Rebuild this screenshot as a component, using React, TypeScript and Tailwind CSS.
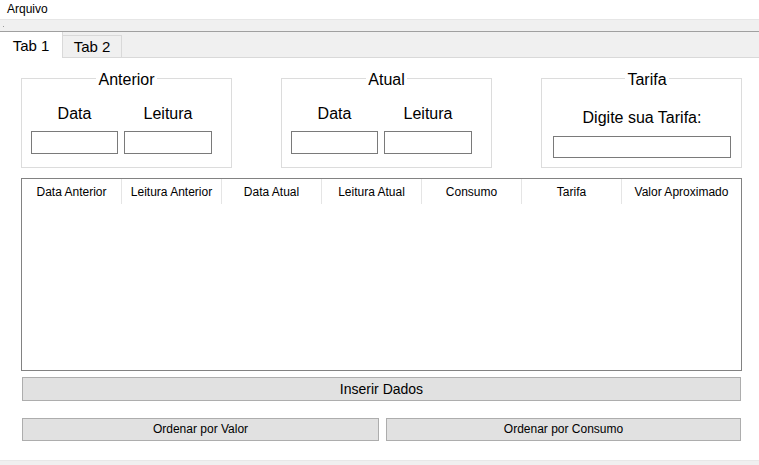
import { useState } from 'react'

const columns = [
  'Data Anterior',
  'Leitura Anterior',
  'Data Atual',
  'Leitura Atual',
  'Consumo',
  'Tarifa',
]

function LeituraGroup({ title }: { title: string }) {
  return (
    <fieldset className="w-[211px] border border-[#dcdcdc] px-[9px] pb-[13px]">
      <legend className="mx-auto px-[2px] text-[16px] leading-[20px] text-black">
        <span className="relative top-[2px]">{title}</span>
      </legend>
      <div className="mt-[15px] flex gap-[6px]">
        <div className="flex w-[87px] flex-col items-center">
          <span className="relative top-[1px] text-[16px] leading-[20px]">Data</span>
          <input className="mt-[8px] h-[23px] w-full border border-[#7a7a7a] bg-white outline-none" />
        </div>
        <div className="flex w-[88px] flex-col items-center">
          <span className="relative top-[1px] text-[16px] leading-[20px]">Leitura</span>
          <input className="mt-[8px] h-[23px] w-full border border-[#7a7a7a] bg-white outline-none" />
        </div>
      </div>
    </fieldset>
  )
}

export default function App() {
  const [tab, setTab] = useState(1)

  return (
    <div
      className="flex h-[465px] w-[759px] flex-col bg-white text-black"
      style={{ fontFamily: '"Liberation Sans", Arial, sans-serif' }}
    >
      {/* menu bar */}
      <div className="h-[19px] pl-[7px] text-[12px] leading-[19px]">Arquivo</div>
      <div className="relative h-[13px] border-t border-b border-t-[#e6e6e6] border-b-[#a0a0a0] bg-[#f0f0f0]">
        <span className="absolute left-[3px] top-[6px] h-[1px] w-[1px] bg-[#9a9a9a]" />
      </div>

      {/* tabs */}
      <div className="flex h-[26px] items-end border-b border-[#d9d9d9] bg-[#f0f0f0]">
        <button
          onClick={() => setTab(1)}
          className={
            tab === 1
              ? '-mb-px h-[26px] w-[63px] border-r border-[#d9d9d9] bg-white text-[15px] leading-[28px]'
              : '-mb-px h-[23px] w-[63px] border-t border-r border-[#d9d9d9] bg-[#f0f0f0] text-[15px] leading-[22px]'
          }
        >
          Tab 1
        </button>
        <button
          onClick={() => setTab(2)}
          className={
            tab === 2
              ? '-mb-px h-[26px] w-[59px] border-r border-[#d9d9d9] bg-white text-[15px] leading-[28px]'
              : 'h-[22px] w-[59px] border-t border-r border-[#d9d9d9] bg-[#f0f0f0] text-[15px] leading-[22px]'
          }
        >
          Tab 2
        </button>
      </div>

      {/* content */}
      <div className="flex-1 pt-[10px]">
        {tab === 1 && (
          <div className="flex flex-col">
            <div className="flex gap-[49px] pl-[21px]">
              <LeituraGroup title="Anterior" />
              <LeituraGroup title="Atual" />
              <fieldset className="w-[201px] border border-[#dcdcdc] pb-[9px] pl-[11px]">
                <legend className="mx-auto px-[2px] text-[16px] leading-[20px]">
                  <span className="relative top-[2px]">Tarifa</span>
                </legend>
                <div className="mt-[19px] flex w-[178px] flex-col items-center">
                  <span className="relative top-[1px] text-[16px] leading-[20px]">Digite sua Tarifa:</span>
                  <input className="mt-[9px] h-[22px] w-full border border-[#7a7a7a] bg-white outline-none" />
                </div>
              </fieldset>
            </div>

            <div className="ml-[21px] mt-[10px] h-[193px] w-[721px] border border-[#828282]">
              <div className="flex h-[25px]">
                {columns.map((c) => (
                  <div
                    key={c}
                    className="flex w-[100px] items-center justify-center border-r border-[#e5e5e5] text-[12px]"
                  >
                    {c}
                  </div>
                ))}
                <div className="flex flex-1 items-center justify-center text-[12px]">Valor Aproximado</div>
              </div>
            </div>

            <button className="ml-[22px] mt-[6px] h-[24px] w-[719px] border border-[#adadad] bg-[#e1e1e1] text-[14px] leading-[22px]">
              Inserir Dados
            </button>

            <div className="ml-[22px] mt-[17px] flex gap-[7px]">
              <button className="h-[23px] w-[357px] border border-[#adadad] bg-[#e1e1e1] text-[12px] leading-[21px]">
                Ordenar por Valor
              </button>
              <button className="h-[23px] w-[355px] border border-[#adadad] bg-[#e1e1e1] text-[12px] leading-[21px]">
                Ordenar por Consumo
              </button>
            </div>
          </div>
        )}
      </div>

      <div className="h-[5px] border-t border-[#e8e8e8] bg-[#f0f0f0]" />
    </div>
  )
}
